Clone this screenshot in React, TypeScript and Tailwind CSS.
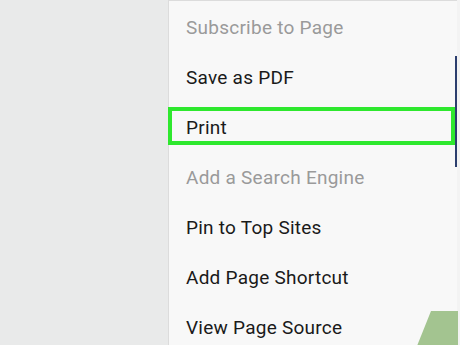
import React from "react";

const items: { label: string; muted?: boolean }[] = [
  { label: "Subscribe to Page", muted: true },
  { label: "Save as PDF" },
  { label: "Print" },
  { label: "Add a Search Engine", muted: true },
  { label: "Pin to Top Sites" },
  { label: "Add Page Shortcut" },
  { label: "View Page Source" },
];

export default function App() {
  return (
    <div
      className="flex w-[460px] h-[345px] overflow-hidden bg-[#e9eaea]"
      style={{ fontFamily: "Roboto, 'Noto Sans', sans-serif" }}
    >
      <div className="w-[168px] shrink-0 bg-[#e9eaea]" />
      <div className="relative w-[289px] shrink-0 h-full bg-[#f8f8f8] border-l border-t border-[#dcdcdc] pt-[2px]">
        {items.map((it) => (
          <div
            key={it.label}
            className={`h-[50px] flex items-center pl-[17px] text-[19px] tracking-[0.25px] ${
              it.muted ? "text-[#9a9a9a]" : "text-[#1a1a1a]"
            }`}
          >
            {it.label}
          </div>
        ))}
        <div className="absolute left-[-1px] top-[106px] w-[287px] h-[38px] border-[4px] border-[#2ee82e]" />
        <div className="absolute right-0 top-[55px] w-[2px] h-[111px] bg-[#2c3e6e]" />
        <svg
          className="absolute left-0 top-0"
          width="289"
          height="345"
          viewBox="0 0 289 345"
        >
          <polygon points="248,345 262,310 289,310 289,345" fill="#a3c490" />
        </svg>
      </div>
      <div className="flex-1 bg-[#f3f3f3]" />
    </div>
  );
}
